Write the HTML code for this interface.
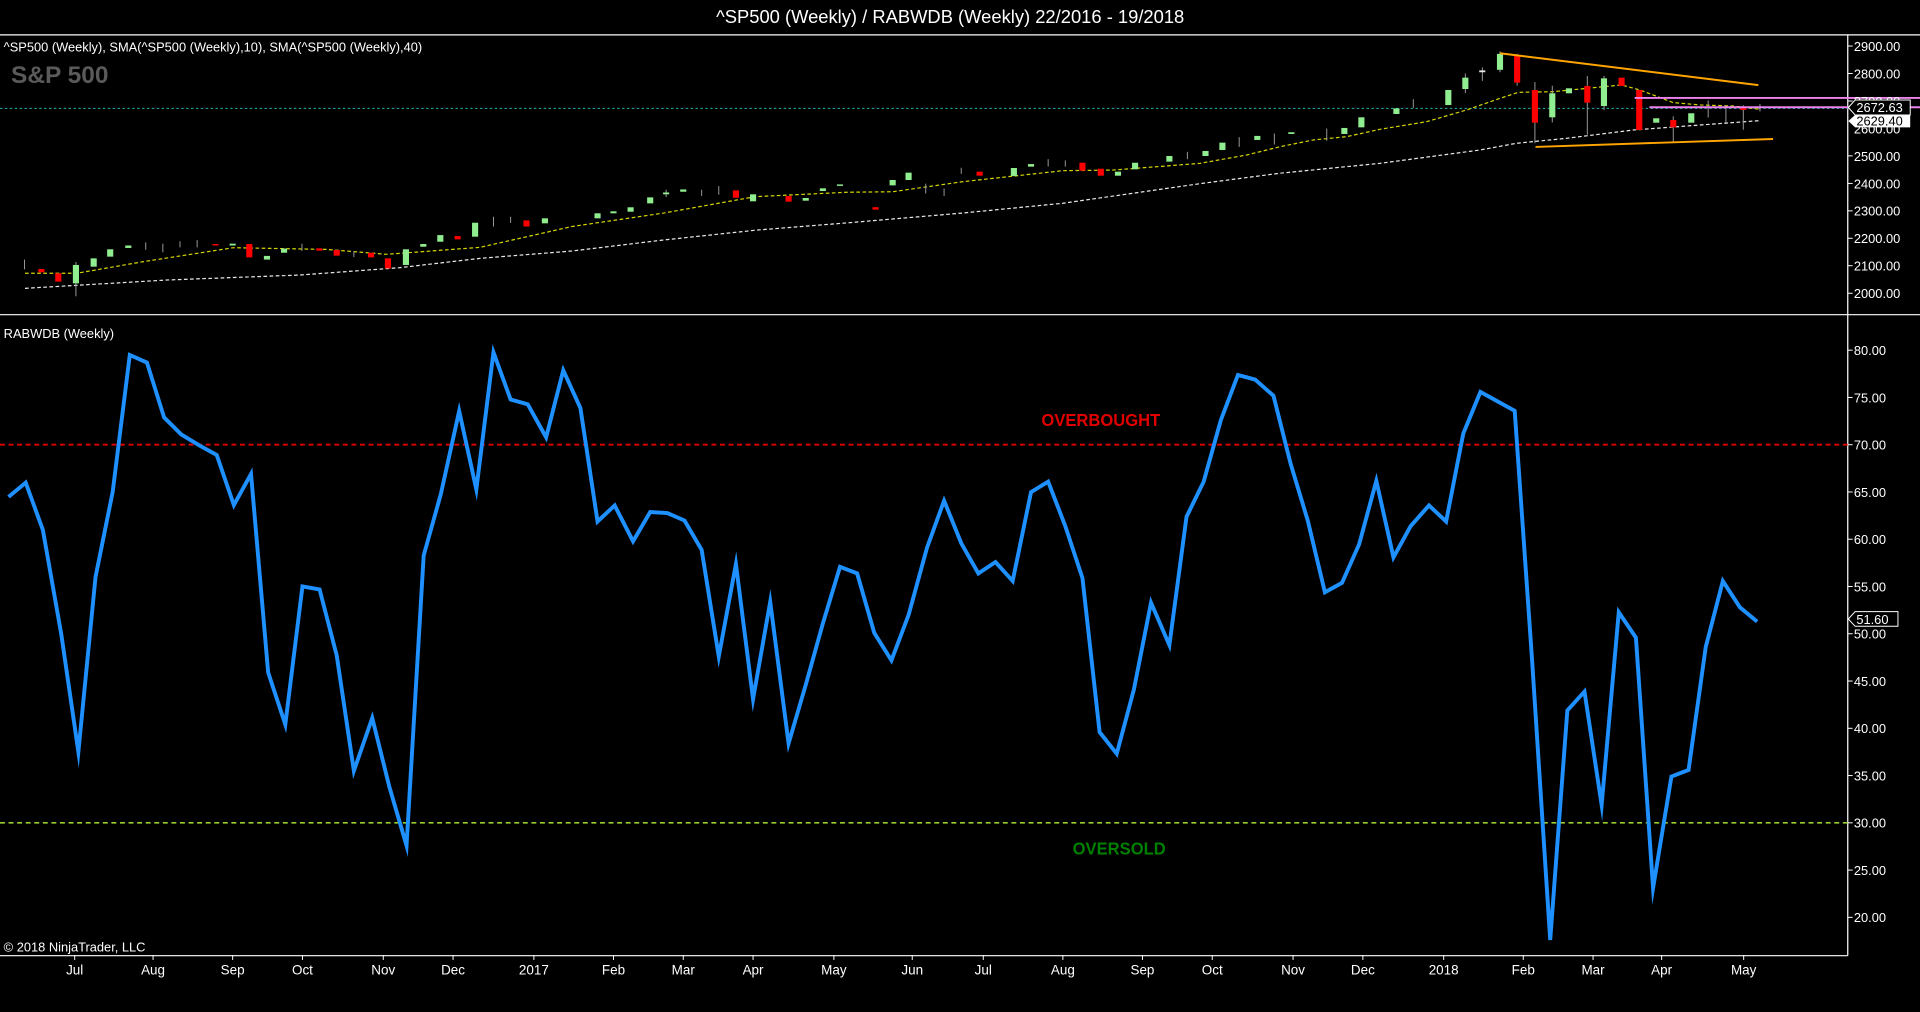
<!DOCTYPE html>
<html><head><meta charset="utf-8"><style>
html,body{margin:0;padding:0;background:#000;width:1920px;height:1012px;overflow:hidden}
svg{display:block}
text{font-family:"Liberation Sans",Arial,sans-serif}
</style></head><body>
<svg width="1920" height="1012" viewBox="0 0 1568 826.5" preserveAspectRatio="none" xmlns="http://www.w3.org/2000/svg">
<rect width="1568" height="826.5" fill="#000"/>
<text x="776" y="19" fill="#fff" font-size="15" text-anchor="middle">^SP500 (Weekly) / RABWDB (Weekly)  22/2016 - 19/2018</text>
<line x1="0" y1="28.5" x2="1568" y2="28.5" stroke="#fff" stroke-width="1"/>
<line x1="0" y1="257" x2="1568" y2="257" stroke="#fff" stroke-width="1"/>
<line x1="1509" y1="28.5" x2="1509" y2="780.5" stroke="#fff" stroke-width="1"/>
<line x1="0" y1="780.5" x2="1509" y2="780.5" stroke="#fff" stroke-width="1"/>

<text x="3" y="42" fill="#fff" font-size="10.5">^SP500 (Weekly),  SMA(^SP500 (Weekly),10),  SMA(^SP500 (Weekly),40)</text>
<text x="9" y="68" fill="#5a5a5a" font-size="20" font-weight="bold">S&amp;P 500</text>

<!-- cyan dotted -->
<line x1="0" y1="88.5" x2="1509" y2="88.5" stroke="#20b2aa" stroke-width="0.8" stroke-dasharray="2,2"/>

<!-- SMA40 white -->
<polyline fill="none" stroke="#e8e8e8" stroke-width="1" stroke-dasharray="3,2" points="20.4,235.5 136,228.7 245,224.6 326.6,218.6 392,211 467,205 542,196 617,188 692,182 786,174 868,166 980,150 1045,141.5 1127,133.4 1208.7,122.5 1238.6,117 1279,113 1333.8,106.2 1388.3,102.1 1437.3,98.5"/>
<!-- SMA10 yellow -->
<polyline fill="none" stroke="#d4d400" stroke-width="1" stroke-dasharray="3,2" points="20.4,223.2 62.6,223.2 117,213.7 190.5,202.3 266.8,203.7 315.8,207.7 392,202 467,185 542,174 617,160.6 692,157 729,156.6 786,148.4 868,139.4 909,138.9 980,133.4 1018,126.6 1045.4,119.8 1072.6,114.3 1099.8,111.6 1127,105.6 1165,99.4 1197.8,89.8 1225,80.3 1240,75.4 1268.5,74.9 1309.4,70.8 1324.3,69.4 1339.3,73.5 1366.5,83.8 1388.3,85.7 1415.5,86.6 1437.3,89.3"/>

<!-- candles -->
<g stroke="#9a9a9a" stroke-width="0.8">
<line x1="1225" y1="42" x2="1225" y2="59"/><line x1="1239" y1="44" x2="1239" y2="70"/><line x1="1253.5" y1="67" x2="1253.5" y2="117"/><line x1="1267.7" y1="70" x2="1267.7" y2="100"/><line x1="1296.3" y1="62" x2="1296.3" y2="110"/><line x1="1310" y1="62" x2="1310" y2="90"/><line x1="1366.5" y1="95" x2="1366.5" y2="116"/><line x1="1395" y1="82" x2="1395" y2="96"/><line x1="1409.5" y1="86" x2="1409.5" y2="100"/><line x1="1423.7" y1="86" x2="1423.7" y2="106"/><line x1="1437.3" y1="85" x2="1437.3" y2="91"/><line x1="1210.6" y1="55" x2="1210.6" y2="66"/><line x1="1196.7" y1="60" x2="1196.7" y2="76"/><line x1="1154.2" y1="81" x2="1154.2" y2="88"/><line x1="1083.5" y1="105" x2="1083.5" y2="115"/><line x1="1040.7" y1="109" x2="1040.7" y2="118"/><line x1="1012" y1="112" x2="1012" y2="120"/><line x1="969.7" y1="124" x2="969.7" y2="130"/>
<line x1="856" y1="130" x2="856" y2="136"/><line x1="870" y1="131" x2="870" y2="136"/><line x1="785" y1="137" x2="785" y2="142"/><line x1="756" y1="150" x2="756" y2="158"/><line x1="771" y1="154" x2="771" y2="160"/><line x1="573" y1="155" x2="573" y2="160"/><line x1="587" y1="152" x2="587" y2="159"/><line x1="544" y1="155" x2="544" y2="161"/><line x1="403" y1="177" x2="403" y2="185"/><line x1="417" y1="177" x2="417" y2="182"/>
<line x1="20" y1="212" x2="20" y2="220"/><line x1="119" y1="198" x2="119" y2="204"/><line x1="133" y1="199" x2="133" y2="206"/><line x1="147" y1="197" x2="147" y2="202"/><line x1="161" y1="196" x2="161" y2="202"/><line x1="246.6" y1="199" x2="246.6" y2="205"/><line x1="289" y1="205" x2="289" y2="210"/><line x1="62" y1="214" x2="62" y2="242"/>
</g>
<g fill="#90ee90">
<rect x="59.5" y="216.4" width="5" height="15"/><rect x="74" y="211" width="5" height="6.8"/><rect x="87.5" y="203.6" width="5" height="6"/><rect x="102.3" y="200.5" width="5" height="2"/><rect x="187.5" y="199" width="5" height="1.5"/><rect x="215.5" y="209" width="5" height="3"/><rect x="229.5" y="203" width="5" height="3.4"/><rect x="329" y="203.6" width="5" height="12.8"/><rect x="343.2" y="199.3" width="5" height="2.2"/><rect x="357.1" y="192" width="5" height="5.4"/><rect x="385.5" y="181.9" width="5" height="11.4"/>
<rect x="442.5" y="178.3" width="5" height="4.1"/><rect x="485.5" y="174.2" width="5" height="4.1"/><rect x="498.5" y="172.6" width="5" height="1.6"/><rect x="512.5" y="169.3" width="5" height="3.6"/><rect x="528.5" y="161.2" width="5" height="4.9"/><rect x="541.5" y="157.2" width="5" height="1.5"/><rect x="555.5" y="154.7" width="5" height="1.9"/><rect x="612.5" y="158.7" width="5" height="5.7"/><rect x="655.5" y="161.7" width="5" height="2.2"/><rect x="669.5" y="153.8" width="5" height="2.2"/><rect x="683.5" y="150.6" width="5" height="1.2"/><rect x="726.5" y="147" width="5" height="4.4"/><rect x="739.5" y="141" width="5" height="6"/><rect x="825.5" y="137.2" width="5" height="6.6"/><rect x="839.5" y="134" width="5" height="2.1"/><rect x="910.5" y="140.2" width="5" height="3.3"/><rect x="924.5" y="132.9" width="5" height="5.4"/><rect x="952.5" y="127.4" width="5" height="4.6"/>
<rect x="982" y="123.3" width="5" height="4.1"/><rect x="995.8" y="116.5" width="5" height="6"/><rect x="1024.3" y="111" width="5" height="3.3"/><rect x="1052.1" y="108" width="5" height="1.4"/><rect x="1095.4" y="104.5" width="5" height="4.9"/><rect x="1109.3" y="95.8" width="5" height="8.2"/><rect x="1137.9" y="88.5" width="5" height="4.6"/><rect x="1180.3" y="73.5" width="5" height="12.3"/><rect x="1194.2" y="63.4" width="5" height="9.3"/><rect x="1222.5" y="44" width="5" height="13"/><rect x="1265.2" y="76.2" width="5" height="19.6"/><rect x="1278.8" y="72.1" width="5" height="4.1"/><rect x="1307.4" y="64" width="5" height="22.6"/><rect x="1350.1" y="96.6" width="5" height="3.6"/><rect x="1378.7" y="92.5" width="5" height="7.7"/>
</g>
<g fill="#e8e8e8"><rect x="1208" y="57.5" width="5" height="1.5"/></g>
<g fill="#ff0000">
<rect x="31.3" y="219.7" width="5" height="2.7"/><rect x="45.1" y="223.2" width="5" height="6.8"/><rect x="173.5" y="199.3" width="5" height="1.2"/><rect x="201.1" y="199.3" width="5" height="10.9"/><rect x="258.3" y="202.8" width="5" height="1.9"/><rect x="272.5" y="204.2" width="5" height="4.6"/><rect x="300.5" y="206.4" width="5" height="3.8"/><rect x="314.3" y="211" width="5" height="8.2"/><rect x="371.2" y="192.8" width="5" height="2.7"/>
<rect x="427.5" y="180" width="5" height="5"/><rect x="598.5" y="155.5" width="5" height="6"/><rect x="641.5" y="160.1" width="5" height="4.6"/><rect x="712.5" y="169.2" width="5" height="2"/><rect x="797.5" y="140.2" width="5" height="3.3"/><rect x="881.5" y="132.9" width="5" height="6.5"/><rect x="896.5" y="137.8" width="5" height="5.7"/>
<rect x="1236.5" y="45.7" width="5" height="21.8"/><rect x="1251" y="73.5" width="5" height="26.7"/><rect x="1293.8" y="70.2" width="5" height="13.6"/><rect x="1321.8" y="63.4" width="5" height="6.8"/><rect x="1336.2" y="73.5" width="5" height="32.7"/><rect x="1364" y="98" width="5" height="6"/><rect x="1421.2" y="87.6" width="5" height="2.2"/>
</g>

<!-- trendlines -->
<line x1="1225" y1="43.5" x2="1436" y2="69.5" stroke="#ffa500" stroke-width="1.6"/>
<line x1="1254" y1="120" x2="1448" y2="113.5" stroke="#ffa500" stroke-width="1.6"/>
<line x1="1335" y1="80" x2="1568" y2="80" stroke="#ee82ee" stroke-width="1.6"/>
<line x1="1347" y1="87.6" x2="1568" y2="87.6" stroke="#ee82ee" stroke-width="1.6"/>

<!-- price axis -->
<g fill="#fff" font-size="10.5">
<g stroke="#fff" stroke-width="0.8">
<line x1="1509" y1="37.6" x2="1513" y2="37.6"/><line x1="1509" y1="60" x2="1513" y2="60"/><line x1="1509" y1="82.5" x2="1513" y2="82.5"/><line x1="1509" y1="127.3" x2="1513" y2="127.3"/><line x1="1509" y1="149.8" x2="1513" y2="149.8"/><line x1="1509" y1="172.2" x2="1513" y2="172.2"/><line x1="1509" y1="194.6" x2="1513" y2="194.6"/><line x1="1509" y1="217" x2="1513" y2="217"/><line x1="1509" y1="239.5" x2="1513" y2="239.5"/>
</g>
<text x="1514" y="41.5">2900.00</text><text x="1514" y="64">2800.00</text><text x="1514" y="86.5">2700.00</text><text x="1514" y="109">2600.00</text><text x="1514" y="131.3">2500.00</text><text x="1514" y="153.8">2400.00</text><text x="1514" y="176.2">2300.00</text><text x="1514" y="198.6">2200.00</text><text x="1514" y="221">2100.00</text><text x="1514" y="243.5">2000.00</text>
</g>
<polygon points="1509.5,98.8 1515,93.9 1560,93.9 1560,104 1515,104" fill="#fff"/>
<text x="1516" y="102.5" fill="#000" font-size="10.5">2629.40</text>
<polygon points="1509.5,87.8 1515,81.7 1560,81.7 1560,93.9 1515,93.9" fill="#000" stroke="#fff" stroke-width="0.8"/>
<text x="1516" y="91.5" fill="#fff" font-size="10.5">2672.63</text>

<!-- RSI panel -->
<text x="3" y="276" fill="#fff" font-size="10.5">RABWDB (Weekly)</text>
<line x1="0" y1="363.2" x2="1509" y2="363.2" stroke="#e00000" stroke-width="1.5" stroke-dasharray="4,3"/>
<line x1="0" y1="672" x2="1509" y2="672" stroke="#9acd32" stroke-width="1.3" stroke-dasharray="4,3"/>
<text x="899" y="348" fill="#e00000" font-size="14" font-weight="bold" text-anchor="middle" textLength="97" lengthAdjust="spacingAndGlyphs">OVERBOUGHT</text>
<text x="914" y="698" fill="#008000" font-size="14" font-weight="bold" text-anchor="middle" textLength="76" lengthAdjust="spacingAndGlyphs">OVERSOLD</text>

<polyline fill="none" stroke="#1e90ff" stroke-width="3.2" stroke-linejoin="miter" stroke-miterlimit="10" points="7,405.8 21,394.2 35,432.8 50,517.7 64,614.1 78,471.3 92,401.9 106,289.9 120,296.1 134,340.9 148,354.8 163,363.9 177,371.6 191,412.5 205,387.1 219,549.2 233,591.7 247,478.9 261,481.4 275,535.4 289,629.6 304,586.4 318,642.7 332,690.6 346,453.7 360,403.6 375,335.7 389,399.7 403,287.7 417,326.3 431,330.2 446,357.2 460,302.4 474,333.3 488,425.9 502,412.8 517,442.1 531,418.2 545,419 559,425.1 573,449 587,536.2 601,460.6 615,571 629,491.5 644,607.2 658,559.4 672,509.2 686,462.9 700,468.3 714,516.9 728,539.3 742,502.3 757,447.5 771,408.9 785,443.6 799,468.3 813,459 827,474.5 842,401.9 856,393.4 870,429.7 884,472.1 898,597.9 912,615.6 926,563.2 940,492.2 955,526.9 969,422 983,393.4 997,343.2 1011,306.2 1025,310 1040,323.2 1054,378.7 1068,425.1 1082,483.7 1096,476 1110,444.4 1124,392.7 1138,455.2 1152,429.7 1167,412.8 1181,425.9 1195,354.1 1209,320.1 1223,327.8 1237,335.5 1251,536.2 1266,767.7 1280,580.2 1294,564.8 1308,657.4 1322,500 1336,520.8 1350,725.3 1365,634.2 1379,628.8 1393,528.5 1407,474.5 1421,496.1 1435,507.7"/>

<g fill="#fff" font-size="10.5">
<g stroke="#fff" stroke-width="0.8">
<line x1="1509" y1="286" x2="1513" y2="286"/><line x1="1509" y1="324.6" x2="1513" y2="324.6"/><line x1="1509" y1="363.2" x2="1513" y2="363.2"/><line x1="1509" y1="401.8" x2="1513" y2="401.8"/><line x1="1509" y1="440.4" x2="1513" y2="440.4"/><line x1="1509" y1="479" x2="1513" y2="479"/><line x1="1509" y1="517.6" x2="1513" y2="517.6"/><line x1="1509" y1="556.2" x2="1513" y2="556.2"/><line x1="1509" y1="594.8" x2="1513" y2="594.8"/><line x1="1509" y1="633.4" x2="1513" y2="633.4"/><line x1="1509" y1="672" x2="1513" y2="672"/><line x1="1509" y1="710.6" x2="1513" y2="710.6"/><line x1="1509" y1="749.2" x2="1513" y2="749.2"/>
</g>
<text x="1514" y="290">80.00</text><text x="1514" y="328.6">75.00</text><text x="1514" y="367.2">70.00</text><text x="1514" y="405.8">65.00</text><text x="1514" y="444.4">60.00</text><text x="1514" y="483">55.00</text><text x="1514" y="521.6">50.00</text><text x="1514" y="560.2">45.00</text><text x="1514" y="598.8">40.00</text><text x="1514" y="637.4">35.00</text><text x="1514" y="676">30.00</text><text x="1514" y="714.6">25.00</text><text x="1514" y="753.2">20.00</text>
</g>
<polygon points="1509.5,505.5 1515,499.5 1550,499.5 1550,511.5 1515,511.5" fill="#000" stroke="#fff" stroke-width="0.8"/>
<text x="1516" y="509.5" fill="#fff" font-size="10.5">51.60</text>

<text x="3" y="777" fill="#fff" font-size="10.5">© 2018 NinjaTrader, LLC</text>

<!-- x axis -->
<g stroke="#fff" stroke-width="0.8">
<line x1="61" y1="780" x2="61" y2="784"/><line x1="125" y1="780" x2="125" y2="784"/><line x1="190" y1="780" x2="190" y2="784"/><line x1="247" y1="780" x2="247" y2="784"/><line x1="313" y1="780" x2="313" y2="784"/><line x1="370" y1="780" x2="370" y2="784"/><line x1="436" y1="780" x2="436" y2="784"/><line x1="501" y1="780" x2="501" y2="784"/><line x1="558" y1="780" x2="558" y2="784"/><line x1="615" y1="780" x2="615" y2="784"/><line x1="681" y1="780" x2="681" y2="784"/><line x1="745" y1="780" x2="745" y2="784"/><line x1="803" y1="780" x2="803" y2="784"/><line x1="868" y1="780" x2="868" y2="784"/><line x1="933" y1="780" x2="933" y2="784"/><line x1="990" y1="780" x2="990" y2="784"/><line x1="1056" y1="780" x2="1056" y2="784"/><line x1="1113" y1="780" x2="1113" y2="784"/><line x1="1179" y1="780" x2="1179" y2="784"/><line x1="1244" y1="780" x2="1244" y2="784"/><line x1="1301" y1="780" x2="1301" y2="784"/><line x1="1357" y1="780" x2="1357" y2="784"/><line x1="1424" y1="780" x2="1424" y2="784"/>
</g>
<g fill="#fff" font-size="11" text-anchor="middle">
<text x="61" y="796">Jul</text><text x="125" y="796">Aug</text><text x="190" y="796">Sep</text><text x="247" y="796">Oct</text><text x="313" y="796">Nov</text><text x="370" y="796">Dec</text><text x="436" y="796">2017</text><text x="501" y="796">Feb</text><text x="558" y="796">Mar</text><text x="615" y="796">Apr</text><text x="681" y="796">May</text><text x="745" y="796">Jun</text><text x="803" y="796">Jul</text><text x="868" y="796">Aug</text><text x="933" y="796">Sep</text><text x="990" y="796">Oct</text><text x="1056" y="796">Nov</text><text x="1113" y="796">Dec</text><text x="1179" y="796">2018</text><text x="1244" y="796">Feb</text><text x="1301" y="796">Mar</text><text x="1357" y="796">Apr</text><text x="1424" y="796">May</text>
</g>
</svg>
</body></html>
